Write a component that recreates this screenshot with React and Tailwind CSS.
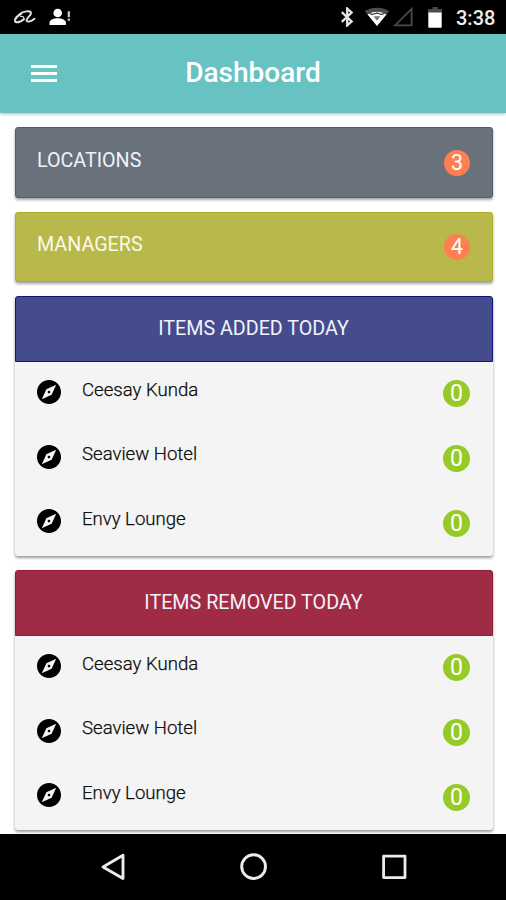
import React from 'react';

const places = [
  { name: 'Ceesay Kunda', count: 0 },
  { name: 'Seaview Hotel', count: 0 },
  { name: 'Envy Lounge', count: 0 },
];

function CompassIcon() {
  return (
    <svg viewBox="2 2 20 20" className="w-6 h-6 mt-[3px]" fill="#000">
      <path d="M12 10.9c-.61 0-1.1.49-1.1 1.1s.49 1.1 1.1 1.1 1.1-.49 1.1-1.1-.49-1.1-1.1-1.1zM12 2C6.48 2 2 6.48 2 12s4.48 10 10 10 10-4.48 10-10S17.52 2 12 2zm2.19 12.19L6 18l3.81-8.19L18 6l-3.81 8.19z" />
    </svg>
  );
}

function StatusBar() {
  return (
    <div className="h-[34px] shrink-0 bg-black flex items-center justify-between pl-3.5 pr-[11px]">
      <div className="flex items-center">
        <svg width="22" height="16" viewBox="0 0 22 16" fill="none" stroke="#e2e2e2" strokeLinecap="round">
          <path d="M6 5C9 2.2 16.6 1.2 17 4c.3 2.5-4.5 5-4.5 7.2 0 2.6 5.500 1.2 8-1.500" strokeWidth="1.9" />
          <path d="M7 4.7C3.5 6.400.7 10 1 12c.4 2.3 5.6 1.2 8.8-1.8" strokeWidth="2.2" />
          <path d="M6.500 7.400c2-.2 4 .4 3.3 2.8" strokeWidth="1.1" />
        </svg>
        <svg width="22" height="18" viewBox="0 0 22 18" fill="#fff" className="ml-[13px]">
          <circle cx="8.7" cy="5" r="4.3" />
          <path d="M.5 17v-2.3C.5 11.6 5.5 10.3 8.7 10.3s8.2 1.3 8.2 4.4V17z" />
          <path d="M18.7 3.2h2.2v6h-2.2zM18.7 10.6h2.2v2.2h-2.2z" fill="#ccc" />
        </svg>
      </div>
      <div className="flex items-center">
        <svg width="14" height="20" viewBox="0 0 14 20" fill="none" stroke="#e6e6e6" strokeWidth="2.3">
          <path d="M.8 5.2l9.8 9.3-4.4 3.9V1.6l4.4 3.9L.8 14.8" />
        </svg>
        <svg width="26" height="20" viewBox="0 0 26 20" className="ml-[9px]">
          <path d="M13 19L.8 4.3C7.5-.3 18.5-.3 25.2 4.3z" fill="#4c4c4c" />
          <path d="M13 19L3.6 7.5c5.3-3.7 13.5-3.7 18.8 0z" fill="#fff" />
          <path d="M9.6 9.2h6.8L13 13.8z" fill="#777" />
          <path d="M5 5.6l3 2 5-1.6 5 1.6 3-2" fill="none" stroke="#4c4c4c" strokeWidth="1.4" />
        </svg>
        <svg width="20" height="20" viewBox="0 0 20 20" className="ml-[3px]" fill="none" stroke="#4a4a4a" strokeWidth="1.8">
          <path d="M18.6 1.8v16.6H2z" />
        </svg>
        <svg width="14" height="21" viewBox="0 0 14 21" className="ml-[15px]">
          <path d="M4.5 0h5v2H14v4H0V2h4.5z" fill="#4c4c4c" />
          <path d="M.3 5.5h13.4V20a.8.8 0 01-.8.8H1.1a.8.8 0 01-.8-.8z" fill="#fff" />
        </svg>
        <span className="relative top-px ml-[14px] w-[39px] text-[20px] leading-none font-medium text-[#eee] whitespace-nowrap">3:38</span>
      </div>
    </div>
  );
}

function CountCard({ label, count, className }) {
  return (
    <div className={`h-[70.5px] mb-[14px] rounded-[3px] border pl-[21.5px] pr-[21.5px] flex justify-between shadow-[0_2px_3px_rgba(0,0,0,0.35)] ${className}`}>
      <span className="mt-[20.5px] text-[19.7px] leading-6">{label}</span>
      <span className="mt-[21.5px] w-[26px] h-[26px] rounded-full bg-[#ff7f50] text-white text-[21.5px] leading-[26px] text-center">
        {count}
      </span>
    </div>
  );
}

function ItemsCard({ title, headerClass }) {
  return (
    <div className="h-[260px] mb-[14px] rounded-[3px] bg-[#f4f4f4] shadow-[0_2px_3px_rgba(0,0,0,0.4)]">
      <div className={`h-[65.5px] rounded-t-[3px] border flex items-center justify-center pt-px text-[19.7px] text-[#f3f1fb] ${headerClass}`}>
        {title}
      </div>
      <div className="pt-[15.5px] px-[22.5px]">
        {places.map((place) => (
          <div key={place.name} className="h-[64.7px] flex items-start">
            <CompassIcon />
            <span className="mt-[0.5px] ml-[21px] flex-1 text-[18.6px] leading-6 font-light text-black [-webkit-text-stroke:0.25px_#222]">{place.name}</span>
            <span className="mt-[3.3px] w-[27px] h-[27px] rounded-full bg-[#96cb27] text-white text-[23px] leading-[28px] text-center">
              {place.count}
            </span>
          </div>
        ))}
      </div>
    </div>
  );
}

function NavBar() {
  return (
    <div className="h-[66px] shrink-0 bg-black flex items-center justify-between pl-[100px] pr-[98px]">
      <svg width="28" height="30" viewBox="0 0 28 30" fill="none" stroke="#ececec" strokeWidth="2.9" strokeLinejoin="round">
        <path d="M23 3.2v23.4L3 14.9z" />
      </svg>
      <svg width="30" height="30" viewBox="0 0 30 30" fill="none" stroke="#ececec" strokeWidth="2.9">
        <circle cx="14.6" cy="14.6" r="11.9" />
      </svg>
      <svg width="28" height="30" viewBox="0 0 28 30" fill="none" stroke="#ececec" strokeWidth="2.8" strokeLinejoin="round">
        <rect x="3.6" y="4.2" width="21.4" height="21.4" />
      </svg>
    </div>
  );
}

function App() {
  return (
    <div className="w-[506px] h-[900px] bg-white flex flex-col overflow-hidden font-['Roboto',sans-serif]">
      <StatusBar />
      <header className="relative h-[79px] shrink-0 bg-[#68c2c2] flex items-center px-[31px] shadow-[0_1px_3px_rgba(0,0,0,0.3)]">
        <div className="w-[26px] flex flex-col gap-[3.5px]">
          <div className="h-[3.5px] bg-white" />
          <div className="h-[3.5px] bg-white" />
          <div className="h-[3.5px] bg-white" />
        </div>
        <h1 className="flex-1 mr-[26px] -mt-px text-center text-[28px] leading-8 font-medium text-white">Dashboard</h1>
      </header>
      <main className="flex-1 min-h-0 overflow-hidden pl-[14.5px] pr-[13.5px] pt-[14px]">
        <CountCard label="LOCATIONS" count={3} className="bg-[#69717d] border-[#525b69] text-[#eff2fa]" />
        <CountCard label="MANAGERS" count={4} className="bg-[#b8b94a] border-[#acad22] text-[#fafae8]" />
        <ItemsCard title="ITEMS ADDED TODAY" headerClass="bg-[#454c8e] border-[#15137c]" />
        <ItemsCard title="ITEMS REMOVED TODAY" headerClass="bg-[#a02b45] border-[#971b36]" />
      </main>
      <NavBar />
    </div>
  );
}

export default App;
